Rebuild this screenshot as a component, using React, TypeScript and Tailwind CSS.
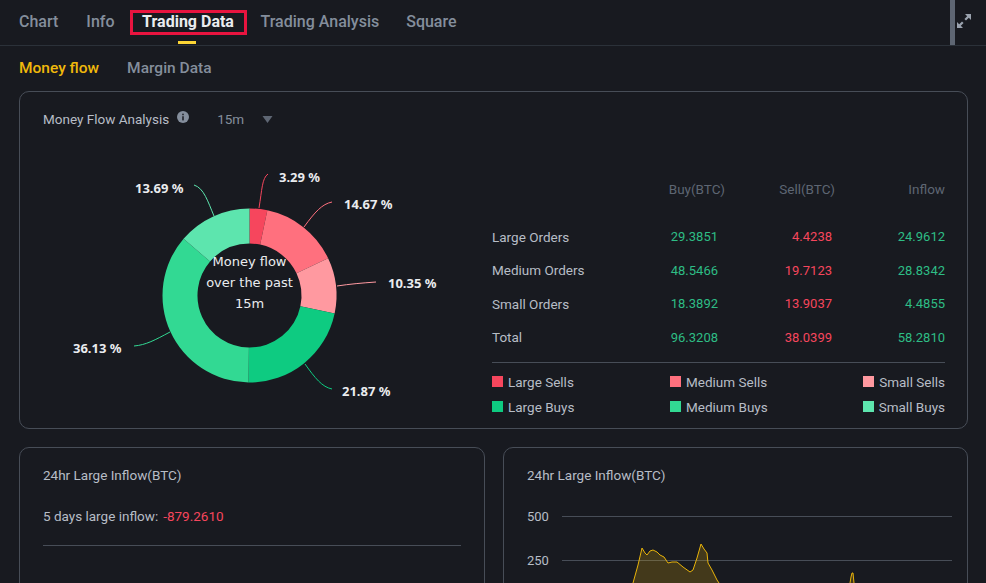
const FONT = "font-['Roboto','Noto_Sans',sans-serif]";

const slices = [
  { pct: 3.29, color: "#F6465D" },
  { pct: 14.67, color: "#FF707E" },
  { pct: 10.35, color: "#FF99A0" },
  { pct: 21.87, color: "#0ECB81" },
  { pct: 36.13, color: "#32D993" },
  { pct: 13.69, color: "#5DE5AE" },
];

const leaders = [
  { d: "M259 208 C262 190 262 178 268 174", color: "#F6465D", label: "3.29 %", x: 279, y: 177 },
  { d: "M304 227 C315 212 322 204 332 202", color: "#FF707E", label: "14.67 %", x: 344, y: 204 },
  { d: "M337 286 C350 284 362 283 376 282", color: "#FF99A0", label: "10.35 %", x: 388, y: 283 },
  { d: "M305 364 C315 378 322 387 332 389", color: "#0ECB81", label: "21.87 %", x: 342, y: 391 },
  { d: "M170 332 C155 340 146 345 134 346", color: "#32D993", label: "36.13 %", x: 73, y: 348 },
  { d: "M214 216 C208 202 204 188 194 185", color: "#5DE5AE", label: "13.69 %", x: 135, y: 188 },
];

const rows = [
  { name: "Large Orders", buy: "29.3851", sell: "4.4238", inflow: "24.9612" },
  { name: "Medium Orders", buy: "48.5466", sell: "19.7123", inflow: "28.8342" },
  { name: "Small Orders", buy: "18.3892", sell: "13.9037", inflow: "4.4855" },
  { name: "Total", buy: "96.3208", sell: "38.0399", inflow: "58.2810" },
];

const CX = 249.5;
const CY = 295.5;

function arc(start: number, end: number) {
  const R = 87;
  const r = 52;
  const p = (rad: number, pct: number) => {
    const a = (pct / 100) * Math.PI * 2 - Math.PI / 2;
    return `${CX + rad * Math.cos(a)} ${CY + rad * Math.sin(a)}`;
  };
  const large = end - start > 50 ? 1 : 0;
  return `M${p(R, start)} A${R} ${R} 0 ${large} 1 ${p(R, end)} L${p(r, end)} A${r} ${r} 0 ${large} 0 ${p(r, start)} Z`;
}

function Donut() {
  let acc = 0;
  return (
    <svg viewBox="43 150 420 270" className="w-[420px] h-[270px] shrink-0">
      {slices.map((s) => {
        const start = acc;
        acc += s.pct;
        return <path key={s.color} d={arc(start, acc)} fill={s.color} />;
      })}
      {leaders.map((l) => (
        <g key={l.label}>
          <path d={l.d} stroke={l.color} fill="none" strokeWidth="1" />
          <text x={l.x} y={l.y + 4.5} fill="#EAECEF" fontSize="13" fontWeight="700" fontFamily="'Noto Sans', sans-serif">
            {l.label}
          </text>
        </g>
      ))}
      <g fill="#EAECEF" fontSize="13" textAnchor="middle" fontFamily="'DejaVu Sans', sans-serif">
        <text x={CX} y={266}>Money flow</text>
        <text x={CX} y={287}>over the past</text>
        <text x={CX} y={308}>15m</text>
      </g>
    </svg>
  );
}

function LegendItem({ color, label }: { color: string; label: string }) {
  return (
    <div className="flex items-center gap-[5px]">
      <span className="w-[11px] h-[11px]" style={{ backgroundColor: color }} />
      <span>{label}</span>
    </div>
  );
}

function OrdersTable() {
  return (
    <div className="w-[453px] ml-[29px] text-[13.5px]">
      <div className="flex h-[20px] items-center text-[#5E6673] mt-[29px]">
        <span className="w-[132px]" />
        <span className="w-[101px] text-right">Buy(BTC)</span>
        <span className="w-[110px] text-right">Sell(BTC)</span>
        <span className="flex-1 text-right">Inflow</span>
      </div>
      <div className="mt-[21px]">
        {rows.map((row) => (
          <div key={row.name} className="flex h-[33.6px] items-center">
            <span className="w-[132px] text-[#B7BDC6]">{row.name}</span>
            <span className="w-[94px] text-right text-[13px] text-[#2EBD85]">{row.buy}</span>
            <span className="w-[114px] text-right text-[13px] text-[#F6465D]">{row.sell}</span>
            <span className="flex-1 text-right text-[13px] text-[#2EBD85]">{row.inflow}</span>
          </div>
        ))}
      </div>
      <div className="border-t border-[#474D57] mt-[8px] pt-[6px] text-[#B7BDC6]">
        <div className="grid grid-cols-3 h-[25px] items-center">
          <LegendItem color="#F6465D" label="Large Sells" />
          <div className="ml-[27px]"><LegendItem color="#FF707E" label="Medium Sells" /></div>
          <div className="flex justify-end"><LegendItem color="#FF99A0" label="Small Sells" /></div>
        </div>
        <div className="grid grid-cols-3 h-[25px] items-center">
          <LegendItem color="#0ECB81" label="Large Buys" />
          <div className="ml-[27px]"><LegendItem color="#32D993" label="Medium Buys" /></div>
          <div className="flex justify-end"><LegendItem color="#5DE5AE" label="Small Buys" /></div>
        </div>
      </div>
    </div>
  );
}

function InflowChart() {
  return (
    <svg viewBox="562 510 390 73" className="w-[390px] h-[73px] ml-[15px]">
      <line x1="562" x2="952" y1="516.5" y2="516.5" stroke="#474D57" />
      <line x1="562" x2="952" y1="560.5" y2="560.5" stroke="#474D57" />
      <path
        d="M633 583 L638 565 L642 548 L645 553 L647 555 L650 551 L653 550 L657 552 L660 555 L664 557 L668 563 L672 562 L677 562 L683 567 L690 572 L693 570 L697 558 L701 544 L704 549 L707 553 L708 563 L712 570 L717 580 L719 583"
        fill="#F0B90B"
        fillOpacity="0.2"
        stroke="#E8B30A"
        strokeWidth="1"
      />
      <path d="M850 583 L851 577 L852 573 L853 573 L854 583" fill="#F0B90B" fillOpacity="0.2" stroke="#E8B30A" strokeWidth="1" />
    </svg>
  );
}

export default function App() {
  return (
    <div className={`${FONT} w-[986px] h-[583px] overflow-hidden bg-[#181A20] text-[#EAECEF]`}>
      {/* tabs */}
      <div className="flex items-center h-[46px] border-b border-[#2B3139] pl-[19px] relative text-[16px] font-medium text-[#848E9C]">
        <span className="-mt-[2px]">Chart</span>
        <span className="ml-[28px] -mt-[2px]">Info</span>
        <div className="relative ml-[15px] h-[25px] w-[117px] border-[3px] border-[#E8143F] pb-[2px] flex items-center justify-center font-bold text-[#EAECEF]">
          Trading Data
          <span className="absolute left-[45px] top-[28px] w-[18px] h-[3px] bg-[#FCD535]" />
        </div>
        <span className="ml-[14px] -mt-[2px]">Trading Analysis</span>
        <span className="ml-[27px] -mt-[2px]">Square</span>
        <span className="absolute left-[950px] top-0 w-[5px] h-[45px] bg-[#5E6673]" />
        <svg viewBox="0 0 16 16" className="absolute left-[956px] top-[13px] w-[16px] h-[16px]" fill="#9AA2AE">
          <path d="M9 1h6v6l-2.2-2.2L10 7.6 8.4 6l2.8-2.8zM7 15H1V9l2.2 2.2L6 8.4 7.6 10l-2.8 2.8z" />
        </svg>
      </div>

      {/* sub tabs */}
      <div className="flex items-center h-[45px] pl-[19px] text-[15.5px] font-medium">
        <span className="text-[#F0B90B]">Money flow</span>
        <span className="ml-[28px] text-[#848E9C]">Margin Data</span>
      </div>

      {/* money flow card */}
      <div className="ml-[19px] w-[949px] h-[338px] border border-[#474D57] rounded-[10px]">
        <div className="flex items-center h-[56px] pl-[23px] pb-[2px] text-[13.5px] text-[#B7BDC6]">
          <span>Money Flow Analysis</span>
          <svg viewBox="0 0 16 16" className="w-[12px] h-[12px] ml-[8px] -mt-[4px]" fill="#848E9C">
            <circle cx="8" cy="8" r="8" />
            <rect x="7" y="7" width="2" height="5.5" fill="#181A20" />
            <rect x="7" y="3.6" width="2" height="2" fill="#181A20" />
          </svg>
          <span className="ml-[28px] text-[#848E9C]">15m</span>
          <svg viewBox="0 0 10 7" className="w-[11px] h-[7px] ml-[18px]" fill="#5E6673">
            <path d="M0 0h10L5 7z" />
          </svg>
        </div>
        <div className="flex items-start pl-[23px] pt-[2px]">
          <Donut />
          <OrdersTable />
        </div>
      </div>

      {/* bottom cards */}
      <div className="grid grid-cols-[466px_465px] gap-[18px] mx-[19px] mt-[18px]">
        <div className="h-[200px] border border-[#474D57] rounded-[10px] px-[23px] text-[13.5px] text-[#B7BDC6]">
          <div className="mt-[18px] h-[18px] flex items-center">24hr Large Inflow(BTC)</div>
          <div className="mt-[23px] h-[18px] flex items-center">
            5 days large inflow:
            <span className="ml-[5px] text-[#F6465D]">-879.2610</span>
          </div>
          <div className="mt-[20px] border-t border-[#474D57]" />
        </div>
        <div className="h-[200px] border border-[#474D57] rounded-[10px] pl-[23px] text-[13.5px] text-[#B7BDC6]">
          <div className="mt-[18px] h-[18px] flex items-center">24hr Large Inflow(BTC)</div>
          <div className="flex mt-[26px]">
            <div className="w-[20px] text-[13px] leading-[44px] -mt-[15px]">
              <div className="h-[44px]">500</div>
              <div className="h-[44px]">250</div>
            </div>
            <InflowChart />
          </div>
        </div>
      </div>
    </div>
  );
}
